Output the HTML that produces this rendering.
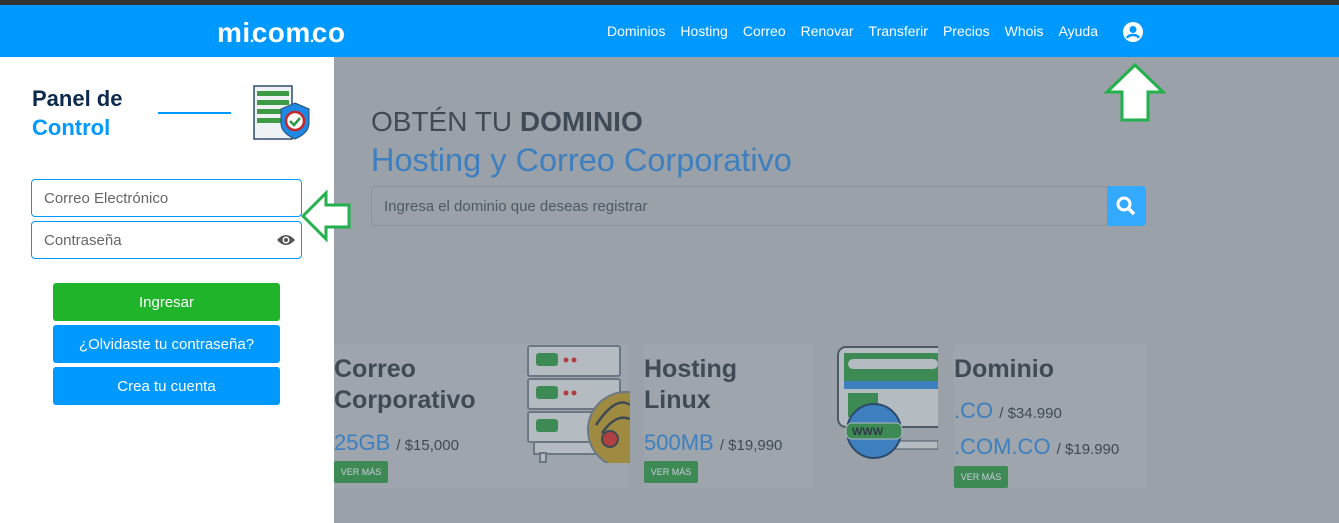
<!DOCTYPE html>
<html><head><meta charset="utf-8"><style>
*{margin:0;padding:0;box-sizing:border-box}
body{width:1339px;height:523px;overflow:hidden;font-family:"Liberation Sans",sans-serif;background:#9aa1a8;position:relative}
.top{position:absolute;left:0;top:0;width:1339px;height:5px;background:#333}
.nav{position:absolute;left:0;top:5px;width:1339px;height:52px;background:#0099ff}
.logo{position:absolute;left:217px;top:12px;color:#fff;font-weight:bold;font-size:28px;letter-spacing:0.5px}
.logo i{font-style:normal;display:inline-block;width:3px;font-size:16px;margin:0 -1px}
.links{position:absolute;top:18px;left:607px;color:#fff;font-size:14px;white-space:nowrap}
.links span{margin-right:15px}
.left{position:absolute;left:0;top:57px;width:334px;height:466px;background:#fff}
.a{position:absolute}
h1{position:absolute;left:32px;top:84px;font-size:22px;line-height:29px;color:#0d2a4d;font-weight:bold}
h1 b{color:#0099ff}
.in{position:absolute;left:31px;width:271px;height:38px;border:1px solid #0099ff;border-radius:4px;color:#666;font-size:15px;padding:10px 12px}
.btn{position:absolute;left:53px;width:227px;height:38px;border-radius:3px;color:#fff;font-size:15px;display:flex;align-items:center;justify-content:center;background:#0099ff}
.card{position:absolute;top:344px;height:144px;background:#9ea5ac}
.ct{font-size:25px;font-weight:bold;color:#3f4a55;line-height:31px}
.pr{color:#3d7fbf;font-size:22px}
.pr small{color:#3f4a55;font-size:15px}
.vm{position:absolute;background:#3d8a55;color:#ccd;font-size:9px;width:54px;height:22px;line-height:22px;text-align:center;border-radius:2px}
</style></head><body>
<div class="top"></div>
<div class="nav">
<div class="logo">mi<i>.</i>com<i>.</i>co</div>
<div class="links"><span>Dominios</span><span>Hosting</span><span>Correo</span><span>Renovar</span><span>Transferir</span><span>Precios</span><span>Whois</span><span>Ayuda</span></div>
<svg class="a" style="left:1122px;top:16px" width="22" height="22" viewBox="0 0 22 22"><circle cx="11" cy="11" r="10" fill="#fff"/><circle cx="11" cy="8.5" r="3.5" fill="#0099ff"/><path d="M5 17c2-4 10-4 12 0" stroke="#0099ff" stroke-width="2.5" fill="none"/></svg>
</div>
<svg class="a" style="left:1104px;top:62px" width="62" height="62" viewBox="0 0 62 62"><path d="M31 3 L59 30 H44 V58 H18 V30 H3 Z" fill="#fff" stroke="#22b14c" stroke-width="3"/></svg>
<div class="a" style="left:371px;top:106px;font-size:28px;color:#3f4a55">OBTÉN TU <b>DOMINIO</b></div>
<div class="a" style="left:371px;top:142px;font-size:32.5px;color:#3d7fbf">Hosting y Correo Corporativo</div>
<div class="a" style="left:371px;top:186px;width:737px;height:40px;border:1px solid #8d949b;border-radius:4px 0 0 4px;background:#9aa1a8;color:#4d5a66;font-size:15px;padding:11px 12px">Ingresa el dominio que deseas registrar</div>
<div class="a" style="left:1107px;top:186px;width:39px;height:40px;background:#33aaff;border-radius:0 4px 4px 0"><svg width="39" height="40"><circle cx="17" cy="18" r="6" stroke="#fff" stroke-width="3" fill="none"/><path d="M21 22 L27 28" stroke="#fff" stroke-width="3.5"/></svg></div>

<div class="card" style="left:334px;width:294px"></div>
<div class="card" style="left:644px;width:170px"></div>
<div class="card" style="left:954px;width:192px"></div>
<div class="a ct" style="left:334px;top:354px">Correo<br>Corporativo</div>
<div class="a pr" style="left:334px;top:430px">25GB <small>/ $15,000</small></div>
<div class="vm" style="left:334px;top:461px">VER MÁS</div>
<svg class="a" style="left:526px;top:345px" width="104" height="118" viewBox="0 0 104 118"><g fill="#b4bbc1" stroke="#6b7782" stroke-width="2"><rect x="2" y="1" width="92" height="30" rx="2"/><rect x="2" y="34" width="92" height="30" rx="2"/><rect x="2" y="67" width="92" height="30" rx="2"/><rect x="8" y="97" width="80" height="12"/><rect x="14" y="108" width="6" height="9"/></g><rect x="10" y="8" width="22" height="13" rx="3" fill="#3d8a55"/><rect x="10" y="41" width="22" height="13" rx="3" fill="#3d8a55"/><rect x="10" y="74" width="22" height="13" rx="3" fill="#3d8a55"/><circle cx="40" cy="15" r="2.5" fill="#b04040"/><circle cx="48" cy="15" r="2.5" fill="#b04040"/><circle cx="40" cy="48" r="2.5" fill="#b04040"/><circle cx="48" cy="48" r="2.5" fill="#b04040"/><circle cx="100" cy="85" r="38" fill="#9e8a40" stroke="#6b7782" stroke-width="2"/><path d="M70 80 Q90 50 104 60 M76 88 Q90 68 104 74" stroke="#3f4a55" stroke-width="2.5" fill="none"/><circle cx="84" cy="94" r="8" fill="#b04040" stroke="#3f4a55" stroke-width="2"/></svg>
<div class="a ct" style="left:644px;top:354px">Hosting<br>Linux</div>
<div class="a pr" style="left:644px;top:430px">500MB <small>/ $19,990</small></div>
<div class="vm" style="left:644px;top:461px">VER MÁS</div>
<svg class="a" style="left:836px;top:345px" width="102" height="116" viewBox="0 0 102 116"><rect x="2" y="2" width="110" height="80" rx="8" fill="#b4bbc1" stroke="#4d5a66" stroke-width="2"/><rect x="8" y="8" width="100" height="28" fill="#3d8a55"/><rect x="12" y="14" width="90" height="10" rx="5" fill="#b4bbc1"/><rect x="8" y="36" width="100" height="8" fill="#3d7fbf"/><rect x="12" y="48" width="30" height="24" fill="#3d8a55"/><rect x="50" y="96" width="52" height="8" fill="#b4bbc1" stroke="#4d5a66"/><circle cx="38" cy="86" r="27" fill="#3d7fbf" stroke="#2d4a6a" stroke-width="2"/><rect x="10" y="78" width="56" height="16" rx="6" fill="#3d8a55" stroke="#b4bbc1"/><text x="16" y="90" font-size="11" font-weight="bold" fill="#2d3a45" font-family="Liberation Sans">WWW</text></svg>
<div class="a ct" style="left:954px;top:354px">Dominio</div>
<div class="a pr" style="left:954px;top:398px">.CO <small>/ $34.990</small></div>
<div class="a pr" style="left:954px;top:434px">.COM.CO <small>/ $19.990</small></div>
<div class="vm" style="left:954px;top:466px">VER MÁS</div>

<div class="left"></div>
<h1>Panel de<br><b>Control</b></h1>
<div class="a" style="left:158px;top:112px;width:73px;height:2px;background:#0099ff"></div>
<svg class="a" style="left:253px;top:85px" width="58" height="56" viewBox="0 0 58 56"><rect x="1" y="1" width="38" height="53" fill="#eef2f5" stroke="#2d4a6a" stroke-width="1.5"/><rect x="4" y="6" width="32" height="5" fill="#3d9a45"/><rect x="4" y="15" width="32" height="5" fill="#3d9a45"/><rect x="4" y="24" width="32" height="5" fill="#3d9a45"/><rect x="4" y="33" width="32" height="5" fill="#3d9a45"/><path d="M42 18 L56 24 V38 Q56 48 42 54 Q28 48 28 38 V24 Z" fill="#1e88e5" stroke="#2d4a6a"/><circle cx="42" cy="36" r="9" fill="#fff" stroke="#c62828" stroke-width="2.5"/><path d="M37 36 l4 4 l6 -7" stroke="#2e9a45" stroke-width="2.5" fill="none"/></svg>
<div class="in" style="top:179px">Correo Electrónico</div>
<div class="in" style="top:221px">Contraseña<svg style="position:absolute;right:5px;top:11px" width="20" height="14" viewBox="0 0 20 14"><path d="M1 7 Q10 -3 19 7 Q10 17 1 7Z" fill="#555"/><circle cx="10" cy="7" r="3.5" fill="#fff"/><circle cx="10" cy="7" r="2" fill="#555"/></svg></div>
<svg class="a" style="left:300px;top:190px" width="52" height="52" viewBox="0 0 52 52"><path d="M3 26 L26 3 V15 H49 V37 H26 V49 Z" fill="#fff" stroke="#22b14c" stroke-width="3"/></svg>
<div class="btn" style="top:283px;background:#1fb42a">Ingresar</div>
<div class="btn" style="top:325px">¿Olvidaste tu contraseña?</div>
<div class="btn" style="top:367px">Crea tu cuenta</div>
</body></html>
